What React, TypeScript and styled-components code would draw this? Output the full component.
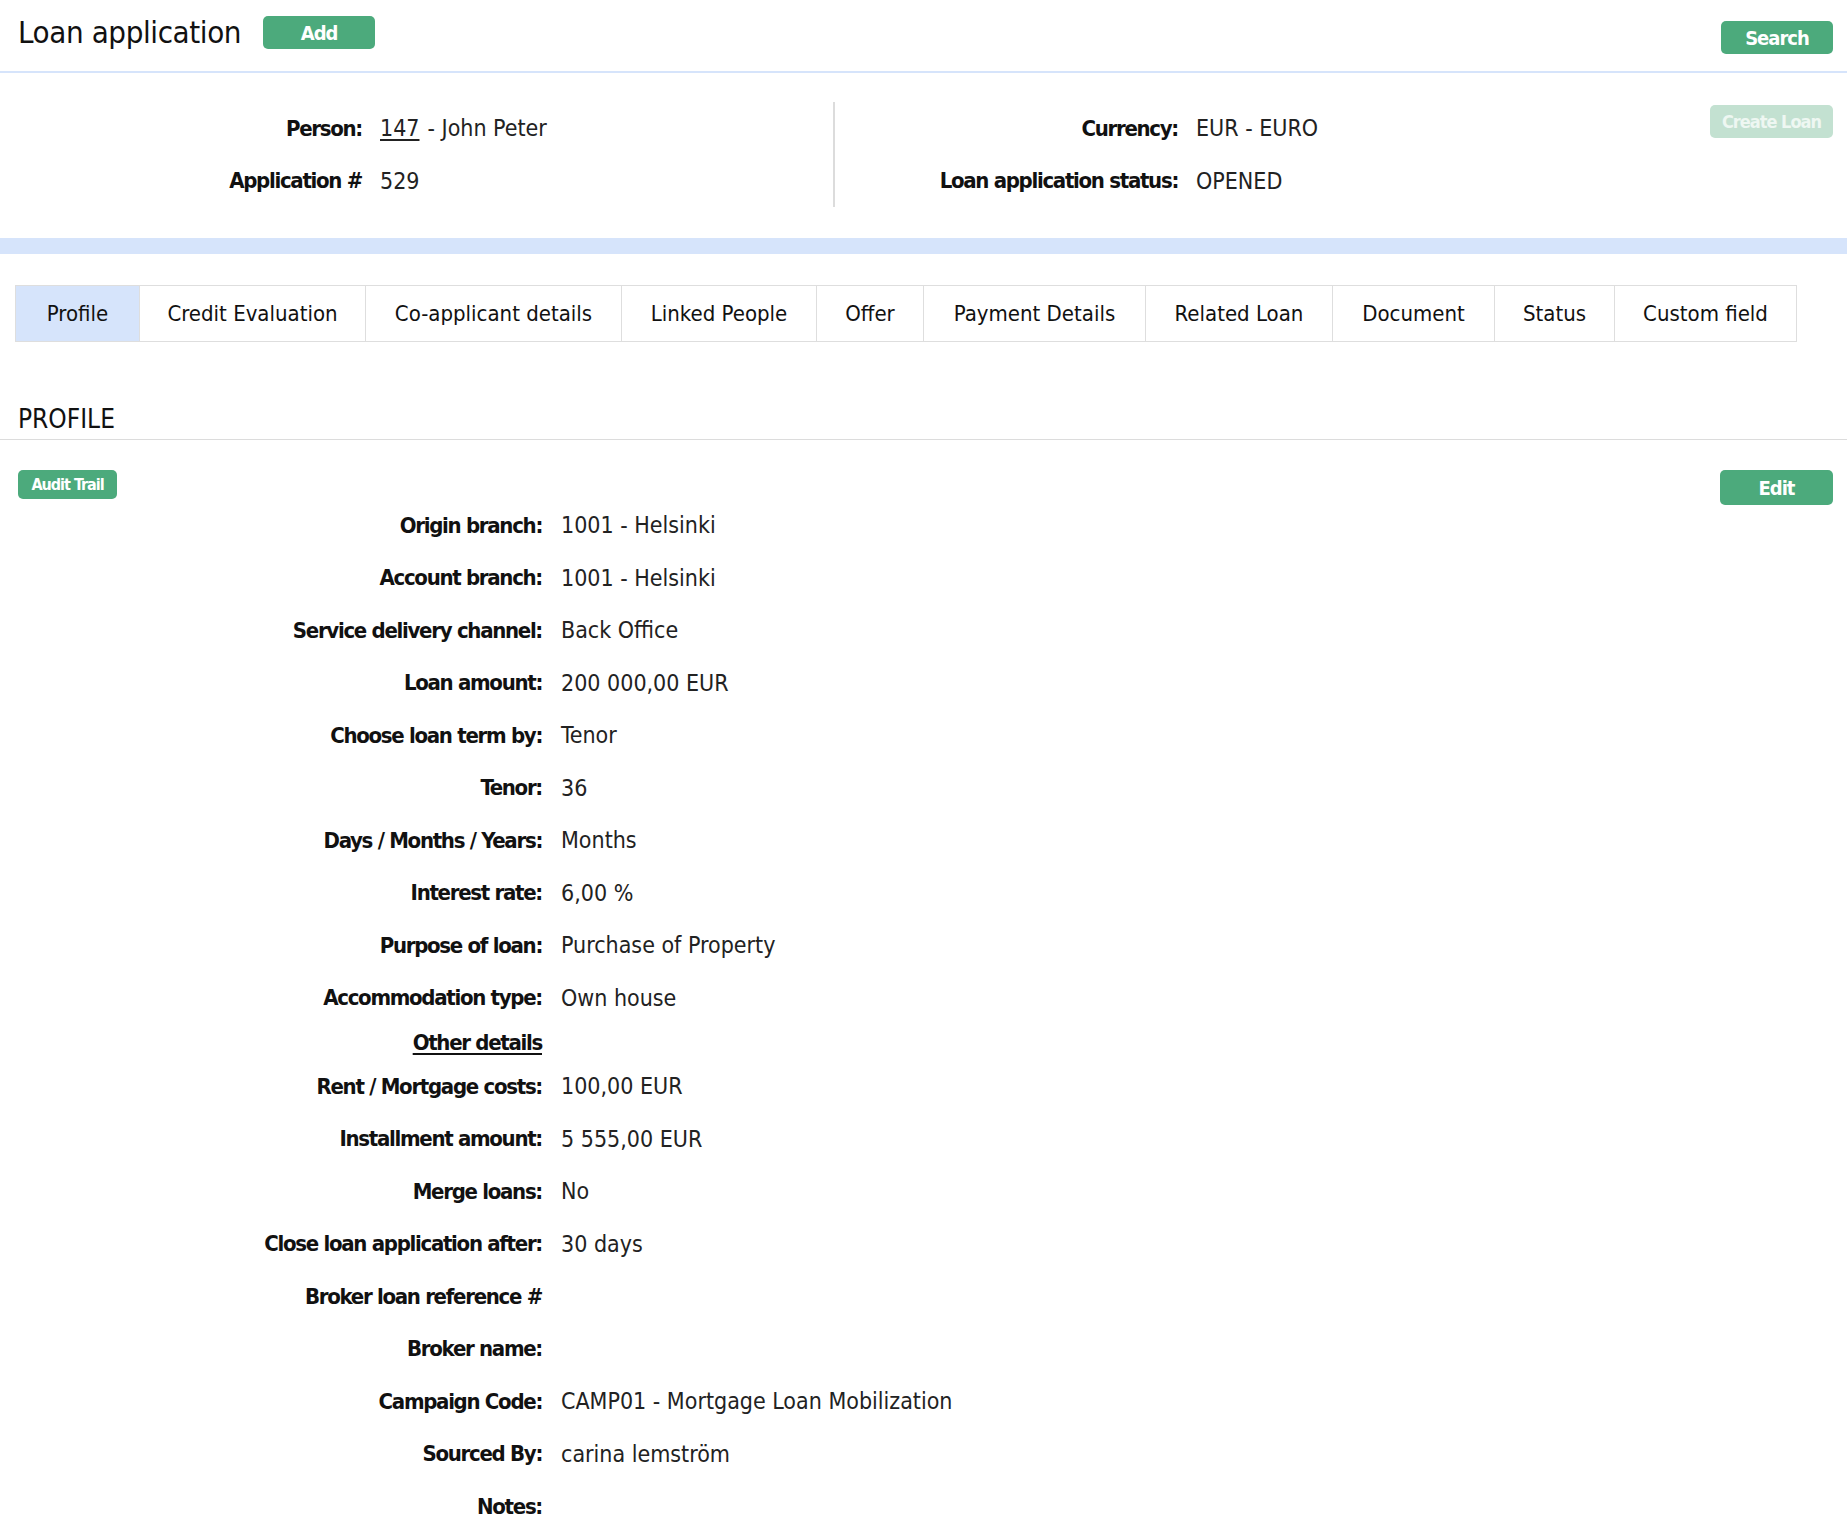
import React from "react";
import styled, { createGlobalStyle } from "styled-components";

const GlobalStyle = createGlobalStyle`
  html, body { margin: 0; padding: 0; background: #fff; }
  body {
    font-family: "DejaVu Sans Condensed", "DejaVu Sans", sans-serif;
    color: #111;
  }
  * { box-sizing: border-box; }
`;

const GREEN = "#4caa7c";
const BLUE = "#d6e4fb";

const Header = styled.header`
  display: flex;
  align-items: flex-start;
  justify-content: space-between;
  height: 73px;
  padding: 16px 14px 0 18px;
  border-bottom: 2px solid ${BLUE};
`;

const TitleGroup = styled.div`
  display: flex;
  align-items: center;
  gap: 22px;
`;

const Title = styled.h1`
  margin: 0;
  font-size: 31px;
  font-weight: 400;
  letter-spacing: -0.4px;
  line-height: 33px;
  color: #111;
`;

const Button = styled.button<{ $w: number; $h: number; $fs?: number; $disabled?: boolean; $mt?: number }>`
  width: ${(p) => p.$w}px;
  height: ${(p) => p.$h}px;
  margin-top: ${(p) => p.$mt ?? 0}px;
  border: none;
  border-radius: 5px;
  background: ${(p) => (p.$disabled ? "#c3e1d1" : GREEN)};
  color: ${(p) => (p.$disabled ? "#eef7f2" : "#fff")};
  font-family: inherit;
  font-weight: 700;
  font-size: ${(p) => p.$fs ?? 20}px;
  letter-spacing: -1px;
  display: inline-flex;
  align-items: center;
  justify-content: center;
  padding: 0;
  cursor: pointer;
`;

const InfoPanel = styled.section`
  display: flex;
  align-items: flex-start;
  padding: 29px 14px 31px 0;
`;

const InfoColumn = styled.div<{ $w: number; $label: number; $divider?: boolean }>`
  width: ${(p) => p.$w}px;
  display: grid;
  grid-template-columns: ${(p) => p.$label}px 1fr;
  grid-auto-rows: 52.5px;
  column-gap: 18px;
  align-items: center;
  border-right: ${(p) => (p.$divider ? "2px solid #dcdcdc" : "none")};
`;

const InfoLabel = styled.div`
  text-align: right;
  font-weight: 700;
  font-size: 22px;
  letter-spacing: -1.3px;
  color: #111;
`;

const InfoValue = styled.div`
  font-size: 23px;
  color: #222;
`;

const LinkNum = styled.span`
  text-decoration: underline;
  text-underline-offset: 3px;
  margin-right: 8px;
`;

const CreateWrap = styled.div`
  margin-left: auto;
  padding-top: 3px;
`;

const Band = styled.div`
  height: 16px;
  background: ${BLUE};
`;

const Tabs = styled.nav`
  display: flex;
  margin: 31px 0 0 15px;
  height: 57px;
  width: fit-content;
  border: 1px solid #dedede;
`;

const Tab = styled.div<{ $active?: boolean; $w: number }>`
  width: ${(p) => p.$w}px;
  display: flex;
  align-items: center;
  justify-content: center;
  font-size: 22px;
  color: #111;
  background: ${(p) => (p.$active ? BLUE : "#fff")};
  border-left: 1px solid #dedede;
  &:first-child { border-left: none; }
`;

const SectionTitle = styled.h2`
  margin: 62px 0 0 0;
  padding: 0 0 5px 18px;
  font-size: 26px;
  font-weight: 400;
  line-height: 30px;
  border-bottom: 1px solid #dcdcdc;
  color: #111;
`;

const ActionBar = styled.div`
  display: flex;
  justify-content: space-between;
  align-items: flex-start;
  padding: 30px 14px 0 18px;
`;

const EditButton = styled(Button)`
  margin-bottom: -6px;
`;

const Details = styled.div`
  display: grid;
  grid-template-columns: 542px 1fr;
  column-gap: 19px;
  padding-bottom: 20px;
`;

const Row = styled.div<{ $h?: number }>`
  display: contents;
  & > * { height: ${(p) => p.$h ?? 52.5}px; }
`;

const Label = styled.div<{ $link?: boolean }>`
  display: flex;
  align-items: center;
  justify-content: flex-end;
  font-weight: 700;
  font-size: 22px;
  letter-spacing: -1.3px;
  color: #111;
  text-decoration: ${(p) => (p.$link ? "underline" : "none")};
  text-underline-offset: 3px;
`;

const Value = styled.div`
  display: flex;
  align-items: center;
  font-size: 23px;
  color: #222;
`;

const tabs: [string, number][] = [
  ["Profile", 123],
  ["Credit Evaluation", 226],
  ["Co-applicant details", 256],
  ["Linked People", 195],
  ["Offer", 107],
  ["Payment Details", 222],
  ["Related Loan", 187],
  ["Document", 162],
  ["Status", 120],
  ["Custom field", 182],
];

type Item = { label: string; value?: string; link?: boolean; h?: number };

const rows: Item[] = [
  { label: "Origin branch:", value: "1001 - Helsinki" },
  { label: "Account branch:", value: "1001 - Helsinki" },
  { label: "Service delivery channel:", value: "Back Office" },
  { label: "Loan amount:", value: "200 000,00 EUR" },
  { label: "Choose loan term by:", value: "Tenor" },
  { label: "Tenor:", value: "36" },
  { label: "Days / Months / Years:", value: "Months" },
  { label: "Interest rate:", value: "6,00 %" },
  { label: "Purpose of loan:", value: "Purchase of Property" },
  { label: "Accommodation type:", value: "Own house" },
  { label: "Other details", link: true, h: 36 },
  { label: "Rent / Mortgage costs:", value: "100,00 EUR" },
  { label: "Installment amount:", value: "5 555,00 EUR" },
  { label: "Merge loans:", value: "No" },
  { label: "Close loan application after:", value: "30 days" },
  { label: "Broker loan reference #", value: "" },
  { label: "Broker name:", value: "" },
  { label: "Campaign Code:", value: "CAMP01 - Mortgage Loan Mobilization" },
  { label: "Sourced By:", value: "carina lemström" },
  { label: "Notes:", value: "" },
];

export default function App() {
  return (
    <>
      <GlobalStyle />
      <Header>
        <TitleGroup>
          <Title>Loan application</Title>
          <Button $w={112} $h={33}>Add</Button>
        </TitleGroup>
        <Button $w={112} $h={33} $mt={5}>Search</Button>
      </Header>

      <InfoPanel>
        <InfoColumn $w={835} $label={362} $divider>
          <InfoLabel>Person:</InfoLabel>
          <InfoValue>
            <LinkNum>147</LinkNum>- John Peter
          </InfoValue>
          <InfoLabel>Application #</InfoLabel>
          <InfoValue>529</InfoValue>
        </InfoColumn>
        <InfoColumn $w={600} $label={343}>
          <InfoLabel>Currency:</InfoLabel>
          <InfoValue>EUR - EURO</InfoValue>
          <InfoLabel>Loan application status:</InfoLabel>
          <InfoValue>OPENED</InfoValue>
        </InfoColumn>
        <CreateWrap>
          <Button $w={123} $h={33} $fs={18} $disabled>Create Loan</Button>
        </CreateWrap>
      </InfoPanel>

      <Band />

      <Tabs>
        {tabs.map(([t, w], i) => (
          <Tab key={t} $w={w} $active={i === 0}>{t}</Tab>
        ))}
      </Tabs>

      <SectionTitle>PROFILE</SectionTitle>

      <ActionBar>
        <Button $w={99} $h={29} $fs={16}>Audit Trail</Button>
        <EditButton $w={113} $h={35}>Edit</EditButton>
      </ActionBar>

      <Details>
        {rows.map((r) => (
          <Row key={r.label} $h={r.h}>
            <Label $link={r.link}>{r.label}</Label>
            <Value>{r.value}</Value>
          </Row>
        ))}
      </Details>
    </>
  );
}
